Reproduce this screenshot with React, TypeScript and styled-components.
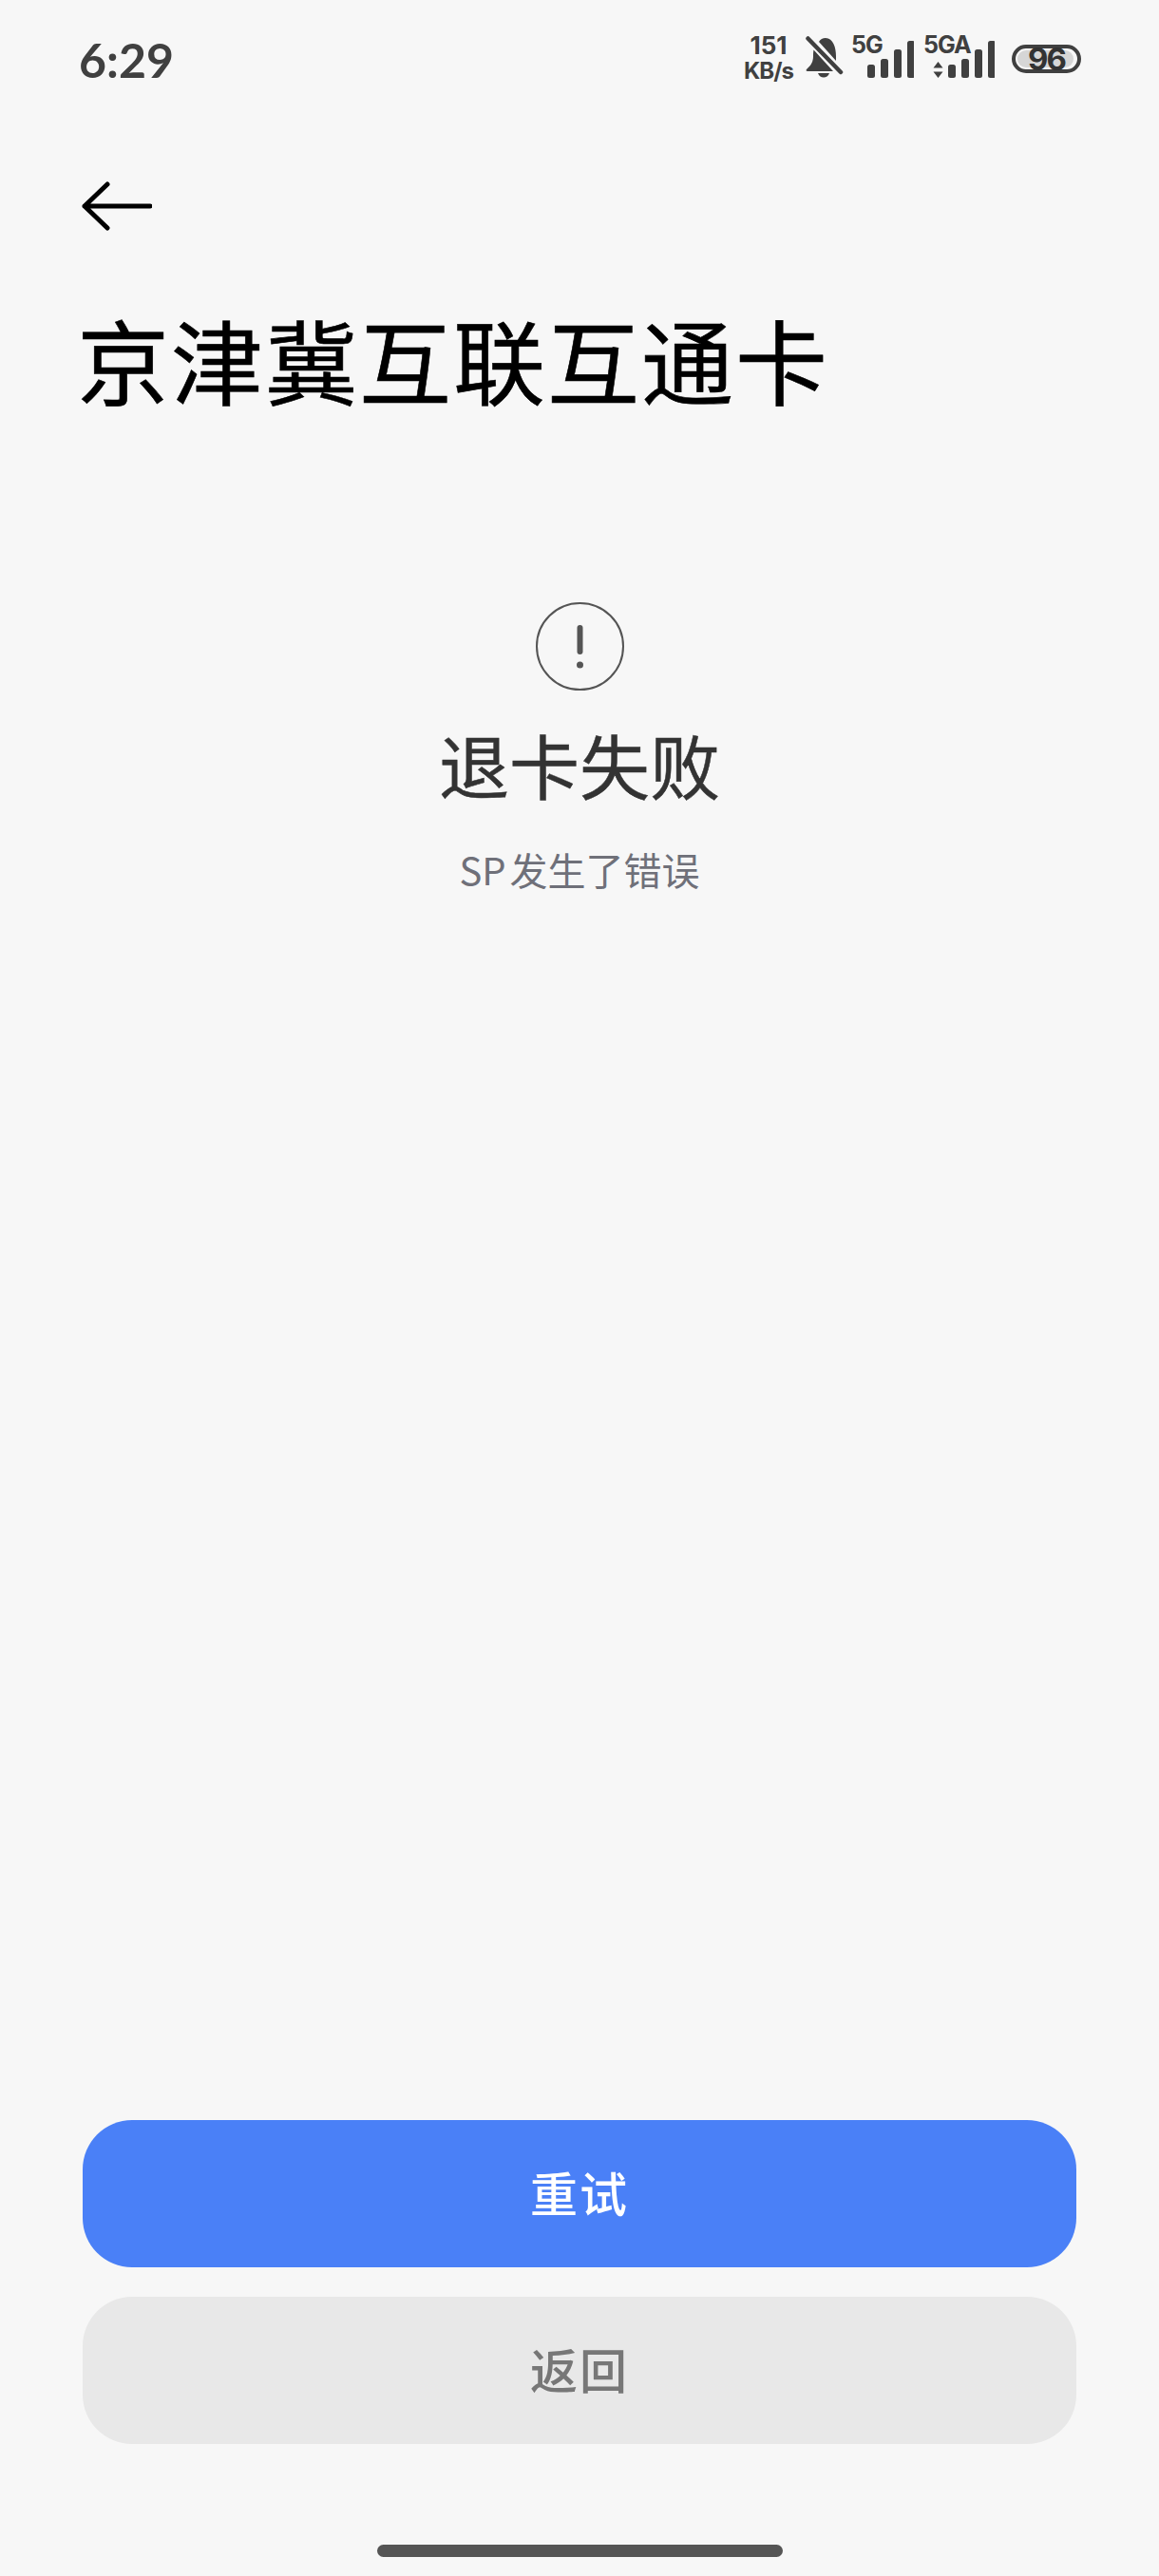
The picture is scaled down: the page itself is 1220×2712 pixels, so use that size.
import React from 'react';
import styled, { createGlobalStyle } from 'styled-components';

const GlobalStyle = createGlobalStyle`
  html, body {
    margin: 0;
    padding: 0;
    background: #f7f7f7;
  }
  * {
    box-sizing: border-box;
  }
`;

const CJK = `"Noto Sans CJK SC", "Noto Sans", sans-serif`;
const ICON_GREY = '#404040';

const Page = styled.div`
  width: 1220px;
  height: 2712px;
  background: #f7f7f7;
  display: flex;
  flex-direction: column;
  font-family: ${CJK};
`;

const StatusBar = styled.div`
  height: 126px;
  padding: 0 82px 0 83px;
  display: flex;
  align-items: center;
  justify-content: space-between;
  color: ${ICON_GREY};
`;

const Time = styled.span`
  font-family: Lato, "Noto Sans", sans-serif;
  font-size: 50px;
  font-weight: 700;
  line-height: 60px;
`;

const StatusIcons = styled.div`
  display: flex;
  align-items: center;
`;

const Speed = styled.div`
  width: 52px;
  margin: 0 13px 5px 0;
  display: flex;
  flex-direction: column;
  align-items: center;
  font-family: Inter, "Liberation Sans", sans-serif;
  font-size: 24px;
  font-weight: 700;
  line-height: 27px;
  letter-spacing: -1px;
  white-space: nowrap;
`;

const SpeedValue = styled.span`
  font-size: 26px;
  letter-spacing: 0;
`;

const BellIcon = styled.svg`
  display: block;
  margin-bottom: 6px;
`;

const SignalGroup = styled.div<{ $width: number; $gap: number }>`
  position: relative;
  width: ${p => p.$width}px;
  height: 46px;
  margin-left: ${p => p.$gap}px;
`;

const SignalLabel = styled.span`
  position: absolute;
  left: 0;
  top: -6px;
  font-family: Inter, "Liberation Sans", sans-serif;
  font-size: 25px;
  font-weight: 700;
  line-height: 26px;
  letter-spacing: -1px;
`;

const SignalSvg = styled.svg`
  position: absolute;
  right: 0;
  bottom: 4px;
  display: block;
`;

const Battery = styled.div`
  position: relative;
  width: 73px;
  height: 30px;
  margin: 0 0 2px 18px;
  border: 4px solid ${ICON_GREY};
  border-radius: 15px;
  display: flex;
  align-items: center;
  justify-content: center;
`;

const BatteryLevel = styled.div<{ $level: number }>`
  position: absolute;
  left: 2px;
  top: 2px;
  bottom: 2px;
  width: ${p => p.$level}%;
  background: #d6d6d6;
  border-radius: 10px;
`;

const BatteryText = styled.span`
  position: relative;
  font-family: Inter, "Liberation Sans", sans-serif;
  font-size: 33px;
  font-weight: 700;
  line-height: 22px;
  letter-spacing: -2px;
  color: #333;
`;

const BackButton = styled.button`
  align-self: flex-start;
  width: 74px;
  height: 52px;
  margin: 65px 0 0 86px;
  padding: 0;
  border: none;
  background: none;
  display: block;
  cursor: pointer;
`;

const Title = styled.h1`
  margin: 79px 0 0 81px;
  font-size: 97px;
  font-weight: 400;
  line-height: 110px;
  letter-spacing: 2px;
  color: #000;
  -webkit-text-stroke: 0.6px #000;
`;

const Result = styled.div`
  margin-top: 202px;
  display: flex;
  flex-direction: column;
  align-items: center;
`;

const ResultIcon = styled.svg`
  display: block;
`;

const ResultTitle = styled.h2`
  margin: 32px 0 0;
  font-size: 74px;
  font-weight: 400;
  line-height: 90px;
  color: #333;
  -webkit-text-stroke: 0.5px #333;
`;

const ResultMessage = styled.p`
  margin: 41px 0 0;
  font-size: 40px;
  font-weight: 400;
  line-height: 50px;
  word-spacing: -5px;
  color: #6f7079;
`;

const Actions = styled.div`
  margin-top: auto;
  padding: 0 87px;
  display: flex;
  flex-direction: column;
  gap: 31px;
`;

const ActionButton = styled.button<{ $variant: 'primary' | 'secondary' }>`
  height: 155px;
  padding: 0 0 6px;
  border: none;
  border-radius: 52px;
  font-family: ${CJK};
  font-size: 50px;
  font-weight: 500;
  letter-spacing: 2px;
  cursor: pointer;
  background: ${p => (p.$variant === 'primary' ? '#4a80f7' : '#e8e8e8')};
  color: ${p => (p.$variant === 'primary' ? '#ffffff' : '#777777')};
`;

const HomeBarArea = styled.div`
  height: 139px;
  padding-top: 106px;
  display: flex;
  justify-content: center;
`;

const HomeBar = styled.div`
  width: 427px;
  height: 13px;
  border-radius: 7px;
  background: #555;
`;

const BAR_HEIGHTS = [14, 20, 30, 39];

const Bars = () => (
  <SignalSvg width={50} height={40} viewBox="0 0 50 40">
    {BAR_HEIGHTS.map((h, i) => (
      <rect key={i} x={1 + i * 14} y={40 - h} width={8} height={h} rx={2.5} fill={ICON_GREY} />
    ))}
  </SignalSvg>
);

export default function App() {
  return (
    <Page>
      <GlobalStyle />
      <StatusBar>
        <Time>6:29</Time>
        <StatusIcons>
          <Speed>
            <SpeedValue>151</SpeedValue>
            <span>KB/s</span>
          </Speed>
          <BellIcon width="40" height="44" viewBox="0 0 40 44">
            <path
              d="M21 2c-3 0-5.500 1.500-7 4l18 20V21c0-9-3-19-11-19zM8.500 14.500C8 17 8 19 8 21c0 6-2 9.500-7 14-.8 1-.3 2 1 2h27z"
              fill={ICON_GREY}
            />
            <path d="M13 39h12c-1 3-3.500 4.500-6 4.500s-5-1.500-6-4.500z" fill={ICON_GREY} />
            <path d="M2.500 2.500L37 38" stroke={ICON_GREY} strokeWidth="4.500" strokeLinecap="round" />
          </BellIcon>
          <SignalGroup $width={66} $gap={8}>
            <SignalLabel>5G</SignalLabel>
            <Bars />
          </SignalGroup>
          <SignalGroup $width={75} $gap={10}>
            <SignalLabel>5GA</SignalLabel>
            <SignalSvg width="75" height="17" viewBox="0 0 75 17">
              <path d="M15.500 0l5 6.500h-10zM15.500 17l5-6.500h-10z" fill={ICON_GREY} />
            </SignalSvg>
            <Bars />
          </SignalGroup>
          <Battery>
            <BatteryLevel $level={90} />
            <BatteryText>96</BatteryText>
          </Battery>
        </StatusIcons>
      </StatusBar>

      <BackButton aria-label="返回">
        <svg width="74" height="52" viewBox="0 0 74 52" fill="none">
          <path
            d="M72 26H3M27 3L3 26l24 23"
            stroke="#000"
            strokeWidth="5"
            strokeLinecap="round"
            strokeLinejoin="round"
          />
        </svg>
      </BackButton>

      <Title>京津冀互联互通卡</Title>

      <Result>
        <ResultIcon width="93" height="93" viewBox="0 0 93 93" fill="none">
          <circle cx="46.500" cy="46.500" r="45.500" stroke="#555" strokeWidth="2" />
          <path d="M46.500 27v25" stroke="#555" strokeWidth="6" strokeLinecap="round" />
          <circle cx="46.500" cy="66" r="3.500" fill="#555" />
        </ResultIcon>
        <ResultTitle>退卡失败</ResultTitle>
        <ResultMessage>SP 发生了错误</ResultMessage>
      </Result>

      <Actions>
        <ActionButton $variant="primary">重试</ActionButton>
        <ActionButton $variant="secondary">返回</ActionButton>
      </Actions>

      <HomeBarArea>
        <HomeBar />
      </HomeBarArea>
    </Page>
  );
}
